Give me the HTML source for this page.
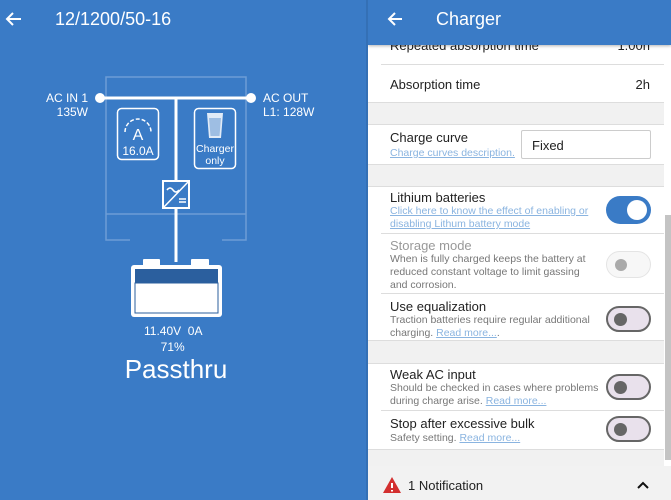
<!DOCTYPE html>
<html><head><style>
*{margin:0;padding:0;box-sizing:border-box}
body{width:671px;height:500px;overflow:hidden;font-family:"Liberation Sans",sans-serif;background:#3a7bc6;position:relative}
.a{position:absolute}
.w{color:#fff}
.rp{position:absolute;left:368px;top:0;width:303px;height:500px;background:#fff;overflow:hidden}
.t{font-size:13px;color:#222}
.s{font-size:10.5px;color:#777;line-height:13px}
.l{color:#8ab4e0;text-decoration:underline}
.ln{position:absolute;left:13px;right:7px;height:1px;background:#ddd}
.gr{position:absolute;left:0;right:7px;background:#f1f1f1;border-top:1px solid #ddd;border-bottom:1px solid #ddd}
.tg{position:absolute;left:238px;width:45px;height:26px;border-radius:13px;border:2px solid #666;background:#e9e1ec}
.tg i{position:absolute;left:6px;top:5px;width:13px;height:13px;border-radius:50%;background:#666}
</style></head><body>
<div class="a" style="left:366px;top:0;width:2px;height:500px;background:#3470b5"></div>
<svg class="a" style="left:0;top:0" width="366" height="500">
<path d="M21 19H7M13 13L7 19L13 25" stroke="#fff" stroke-width="2" fill="none"/>
<g stroke="#6c9dd6" stroke-width="1.5" fill="none">
<path d="M130 240H106V77H246V240H222"/><path d="M106 214H246"/></g>
<path d="M100 98H251M176 98V262" stroke="#fff" stroke-width="3"/>
<circle cx="100" cy="98" r="5" fill="#fff"/><circle cx="251" cy="98" r="5" fill="#fff"/>
<rect x="117.5" y="108.5" width="41" height="51" rx="4" fill="#3a7bc6" stroke="#fff" stroke-width="1.5"/>
<path d="M125 132a13 13 0 1 1 26 0" stroke="#fff" stroke-width="1.5" fill="none" stroke-dasharray="4 2"/>
<text x="138" y="140" fill="#fff" font-size="16" text-anchor="middle" font-family="Liberation Sans">A</text>
<text x="138" y="155" fill="#fff" font-size="12" text-anchor="middle" font-family="Liberation Sans">16.0A</text>
<rect x="194.5" y="108.5" width="41" height="60" rx="4" fill="#3a7bc6" stroke="#fff" stroke-width="1.5"/>
<path d="M207 113h16l-2 25h-12z" fill="#fff" opacity="0.85"/>
<path d="M209 118h12l-1.5 18h-9z" fill="#3a7bc6" opacity="0.4"/>
<text x="215" y="152" fill="#fff" font-size="10.5" text-anchor="middle" font-family="Liberation Sans">Charger</text>
<text x="215" y="164" fill="#fff" font-size="10.5" text-anchor="middle" font-family="Liberation Sans">only</text>
<rect x="163" y="181" width="26" height="27" fill="#3a7bc6" stroke="#fff" stroke-width="2"/>
<path d="M163 208L189 181M167 190q3-4 6 0t6 0M179 199h7M179 202h7" stroke="#fff" stroke-width="1.5" fill="none"/>
<rect x="143" y="259" width="17" height="7" rx="1" fill="#fff"/><rect x="191" y="259" width="18" height="7" rx="1" fill="#fff"/>
<rect x="131" y="265" width="91" height="52" rx="3" fill="#fff"/>
<rect x="135" y="269" width="83" height="14" fill="#2b5f9e"/>
<rect x="135" y="283" width="83" height="30" fill="#fff" stroke="#2b5f9e" stroke-width="1"/>
</svg>
<div class="a w" style="left:55px;top:9px;font-size:18px">12/1200/50-16</div>
<div class="a w" style="left:20px;top:91px;width:68px;text-align:right;font-size:12px;line-height:14px">AC IN 1<br>135W</div>
<div class="a w" style="left:263px;top:91px;font-size:12px;line-height:14px">AC OUT<br>L1: 128W</div>
<div class="a w" style="left:144px;top:323px;font-size:12px;line-height:16px">11.40V&nbsp;&nbsp;0A<br>&nbsp;&nbsp;&nbsp;&nbsp;&nbsp;71%</div>
<div class="a w" style="left:0;width:352px;text-align:center;top:354px;font-size:26px">Passthru</div>

<div class="rp">
<div class="a t" style="left:22px;top:38px">Repeated absorption time</div>
<div class="a t" style="right:21px;top:38px">1.00h</div>
<div class="ln" style="top:64px"></div>
<div class="a t" style="left:22px;top:77px">Absorption time</div>
<div class="a t" style="right:21px;top:77px">2h</div>
<div class="gr" style="top:102px;height:23px"></div>
<div class="a t" style="left:22px;top:130px">Charge curve</div>
<div class="a s l" style="left:22px;top:147px">Charge curves description.</div>
<div class="a t" style="left:153px;top:130px;width:130px;height:29px;border:1px solid #ccc;border-radius:2px;padding:7px 10px">Fixed</div>
<div class="gr" style="top:164px;height:23px"></div>
<div class="a t" style="left:22px;top:190px">Lithium batteries</div>
<div class="a s l" style="left:22px;top:205px;width:215px">Click here to know the effect of enabling or disabling Lithum battery mode</div>
<div class="a" style="left:238px;top:196px;width:45px;height:28px;border-radius:14px;background:#3a7bc6"><i style="position:absolute;right:4px;top:4px;width:20px;height:20px;border-radius:50%;background:#fff"></i></div>
<div class="ln" style="top:233px"></div>
<div class="a t" style="left:22px;top:238px;color:#999">Storage mode</div>
<div class="a s" style="left:22px;top:253px;width:205px">When is fully charged keeps the battery at reduced constant voltage to limit gassing and corrosion.</div>
<div class="a" style="left:238px;top:251px;width:45px;height:27px;border-radius:14px;border:1px solid #e4e4e4;background:#f7f7f7"><i style="position:absolute;left:8px;top:7px;width:12px;height:12px;border-radius:50%;background:#aaa"></i></div>
<div class="ln" style="top:293px"></div>
<div class="a t" style="left:22px;top:299px">Use equalization</div>
<div class="a s" style="left:22px;top:314px;width:220px">Traction batteries require regular additional charging. <span class="l">Read more...</span>.</div>
<div class="tg" style="top:306px"><i></i></div>
<div class="gr" style="top:340px;height:24px"></div>
<div class="a t" style="left:22px;top:367px">Weak AC input</div>
<div class="a s" style="left:22px;top:382px;width:230px">Should be checked in cases where problems during charge arise. <span class="l">Read more...</span></div>
<div class="tg" style="top:374px"><i></i></div>
<div class="ln" style="top:410px"></div>
<div class="a t" style="left:22px;top:416px">Stop after excessive bulk</div>
<div class="a s" style="left:22px;top:432px">Safety setting. <span class="l">Read more...</span></div>
<div class="tg" style="top:416px"><i></i></div>
<div class="gr" style="top:449px;height:20px;border-bottom:none"></div>
<div class="a" style="left:296px;top:0;width:7px;height:466px;background:#fff"></div>
<div class="a" style="left:297px;top:215px;width:6px;height:245px;background:#c4c4c4"></div>
<div class="a" style="left:0;top:466px;width:303px;height:34px;background:#f2f2f2"></div>
<svg class="a" style="left:14px;top:476px" width="20" height="18"><path d="M10 1L19 17H1z" fill="#d32f2f"/><path d="M10 7v5M10 14v1.5" stroke="#fff" stroke-width="2"/></svg>
<div class="a t" style="left:40px;top:478px">1 Notification</div>
<svg class="a" style="left:269px;top:481px" width="12" height="8"><path d="M1 7L6 2L11 7" stroke="#111" stroke-width="2" fill="none"/></svg>
<div class="a" style="left:0;top:0;width:303px;height:45px;background:#3a7bc6;box-shadow:0 1px 3px rgba(0,0,0,.3)"></div>
<svg class="a" style="left:18px;top:11px" width="18" height="16"><path d="M16 8H3M9 2L3 8L9 14" stroke="#fff" stroke-width="2" fill="none"/></svg>
<div class="a w" style="left:68px;top:9px;font-size:18px">Charger</div>
</div>
</body></html>
